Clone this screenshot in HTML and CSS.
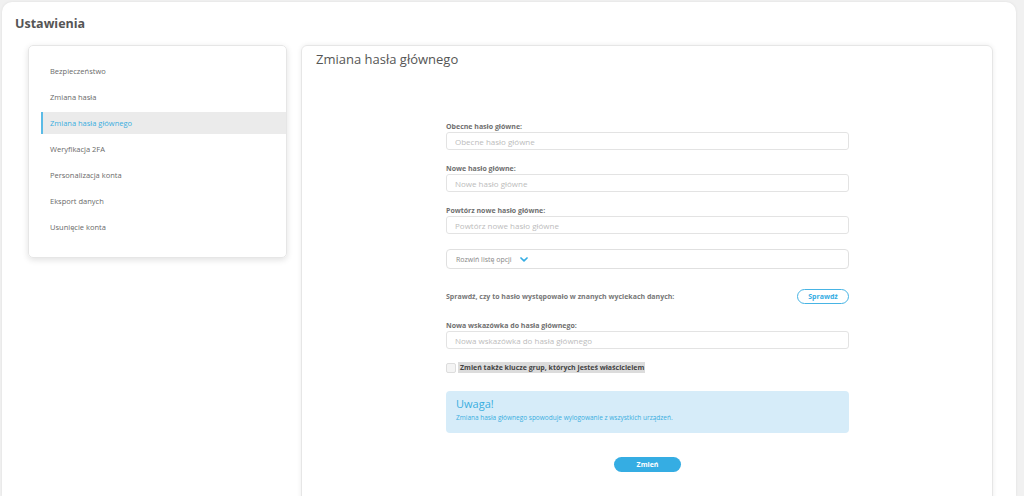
FILE: index.html
```html
<!DOCTYPE html>
<html>
<head>
    <title>Ustawienia</title>
    <link rel="stylesheet" href="styles.css">
</head>
<body>
<div class="page">
    <h1 class="page-title">Ustawienia</h1>
    <div class="columns">
        <div class="menu">
            <a class="menu-item">Bezpieczeństwo</a>
            <a class="menu-item">Zmiana hasła</a>
            <a class="menu-item active">Zmiana hasła głównego</a>
            <a class="menu-item">Weryfikacja 2FA</a>
            <a class="menu-item">Personalizacja konta</a>
            <a class="menu-item">Eksport danych</a>
            <a class="menu-item">Usunięcie konta</a>
        </div>
        <div class="content">
            <h2 class="content-title">Zmiana hasła głównego</h2>
            <form class="form">
                <label class="field-label">Obecne hasło główne:</label>
                <input type="password" class="field" placeholder="Obecne hasło główne">

                <label class="field-label">Nowe hasło główne:</label>
                <input type="password" class="field" placeholder="Nowe hasło główne">

                <label class="field-label">Powtórz nowe hasło główne:</label>
                <input type="password" class="field" placeholder="Powtórz nowe hasło główne">

                <div class="dropdown">
                    Rozwiń listę opcji
                    <svg class="chevron" width="8" height="5" viewBox="0 0 8 5"><path d="M1 1 L4 3.8 L7 1" fill="none" stroke="#35ade3" stroke-width="1.7" stroke-linecap="round" stroke-linejoin="round"/></svg>
                </div>

                <div class="check-row">
                    <span class="check-text">Sprawdź, czy to hasło występowało w znanych wyciekach danych:</span>
                    <button type="button" class="btn-outline">Sprawdź</button>
                </div>

                <label class="field-label hint-label">Nowa wskazówka do hasła głównego:</label>
                <input type="text" class="field" placeholder="Nowa wskazówka do hasła głównego">

                <label class="checkbox">
                    <span class="box"></span>
                    <span class="checkbox-text">Zmień także klucze grup, których jesteś właścicielem</span>
                </label>

                <div class="alert">
                    <div class="alert-title">Uwaga!</div>
                    <div class="alert-text">Zmiana hasła głównego spowoduje wylogowanie z wszystkich urządzeń.</div>
                </div>

                <div class="actions">
                    <button type="button" class="btn-primary">Zmień</button>
                </div>
            </form>
        </div>
    </div>
</div>
</body>
</html>
```

FILE: styles.css
```css
body {
    margin: 0;
    background-color: #f1f1f1;
    font-family: "Open Sans", "DejaVu Sans", sans-serif;
    color: #555;
}

.page {
    margin: 2px 8px 0 2px;
    background-color: #fff;
    border-radius: 10px 10px 0 0;
    height: 494px;
    box-shadow: 0 0 3px rgba(0, 0, 0, 0.08);
    overflow: hidden;
}

.page-title {
    margin: 0;
    padding: 13px 0 0 13px;
    font-size: 12.5px;
    font-weight: 700;
    color: #555;
    height: 30px;
    box-sizing: border-box;
}

.columns {
    display: flex;
    align-items: flex-start;
    padding: 13px 0 0 26px;
    gap: 14px;
}

.menu {
    width: 259px;
    height: 213px;
    box-sizing: border-box;
    padding: 12px 0 0 12px;
    border: 1px solid #e6e6e6;
    border-radius: 5px;
    box-shadow: 0 2px 6px rgba(0, 0, 0, 0.12);
    display: flex;
    flex-direction: column;
}

.menu-item {
    display: block;
    height: 26px;
    line-height: 26px;
    padding-left: 7px;
    font-size: 7.5px;
    color: #6a6a6a;
    border-left: 2px solid transparent;
}

.menu-item.active {
    height: 22px;
    line-height: 22px;
    margin: 2px 0;
    background-color: #ebebeb;
    border-left-color: #5bbbe6;
    color: #3aaee0;
}

.content {
    width: 692px;
    height: 460px;
    box-sizing: border-box;
    border: 1px solid #e6e6e6;
    border-radius: 6px;
    box-shadow: 0 0 5px rgba(0, 0, 0, 0.08);
    padding: 4px 0 0 14px;
}

.content-title {
    margin: 0;
    font-size: 13px;
    line-height: 18px;
    font-weight: 400;
    color: #555;
}

.form {
    width: 403px;
    margin: 54px 0 0 130px;
    display: flex;
    flex-direction: column;
}

.field-label {
    font-size: 7px;
    line-height: 9px;
    font-weight: 700;
    color: #6f6f6f;
    margin-bottom: 1px;
}

.field {
    height: 18px;
    box-sizing: border-box;
    border: 1px solid #e3e3e3;
    border-radius: 3px;
    padding: 0 8px;
    font-family: inherit;
    font-size: 8px;
    margin: 0 0 14px 0;
}

.field::placeholder {
    color: #bcbcbc;
}

.dropdown {
    margin-top: 1px;
    height: 20px;
    box-sizing: border-box;
    border: 1px solid #e0e0e0;
    border-radius: 4px;
    padding: 0 9px;
    display: flex;
    align-items: center;
    gap: 8px;
    font-size: 7px;
    color: #888;
}

.check-row {
    display: flex;
    justify-content: space-between;
    align-items: center;
    height: 15px;
    margin-top: 20px;
}

.check-text {
    font-size: 7px;
    font-weight: 700;
    color: #777;
}

.btn-outline {
    width: 52px;
    height: 15px;
    border: 1px solid #47b4e4;
    border-radius: 8px;
    background: #fff;
    color: #35ade3;
    font-family: inherit;
    font-size: 7px;
    font-weight: 700;
    padding: 0;
}

.hint-label {
    margin-top: 17px;
}

.checkbox {
    display: flex;
    align-items: center;
    gap: 2px;
    height: 11px;
    margin-top: -1px;
}

.box {
    width: 8px;
    height: 8px;
    border: 1px solid #ddd;
    border-radius: 2px;
    background: #f4f4f4;
}

.checkbox-text {
    background-color: #dcdcdc;
    font-size: 7px;
    line-height: 11px;
    font-weight: 700;
    color: #444;
    padding: 0 1px 0 2px;
}

.alert {
    margin-top: 18px;
    height: 42px;
    box-sizing: border-box;
    background-color: #d6ecf9;
    border-radius: 4px;
    padding: 5px 10px;
}

.alert-title {
    font-size: 11px;
    line-height: 15px;
    color: #3aaee0;
}

.alert-text {
    margin-top: 2px;
    font-size: 6.5px;
    color: #3aaee0;
}

.actions {
    display: flex;
    justify-content: center;
    margin-top: 24px;
}

.btn-primary {
    width: 67px;
    height: 15px;
    border: none;
    border-radius: 8px;
    background-color: #35ade3;
    color: #fff;
    font-family: inherit;
    font-size: 7px;
    font-weight: 700;
    padding: 0;
}
```
